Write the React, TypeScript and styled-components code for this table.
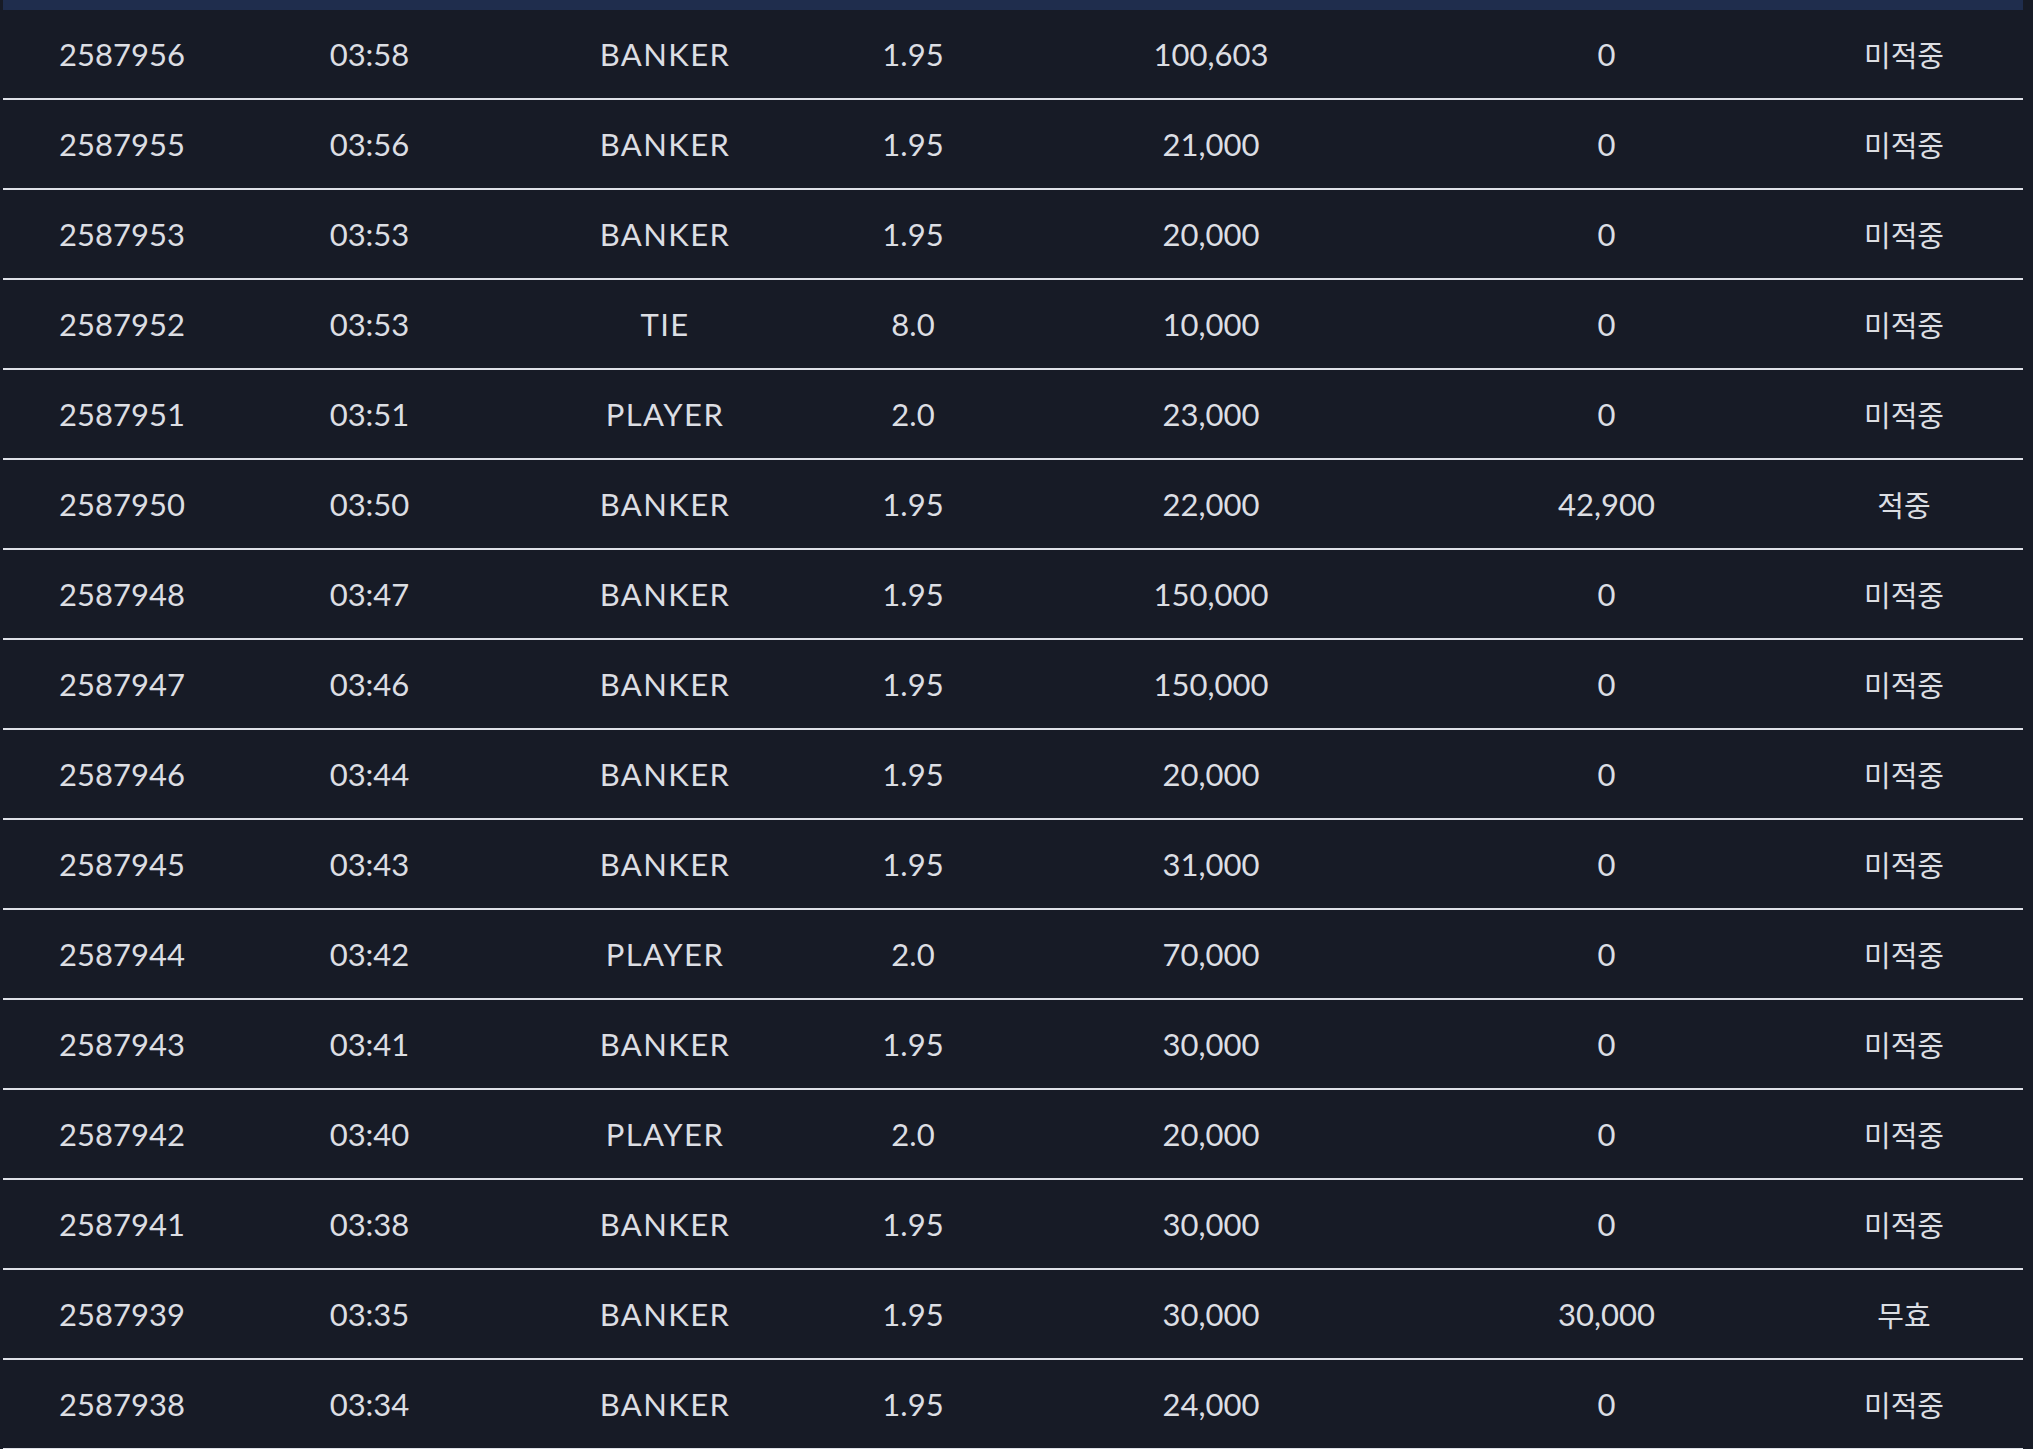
import React from 'react'
import styled, { createGlobalStyle } from 'styled-components'

type Bet = {
  id: string
  time: string
  pick: string
  odds: string
  amount: string
  payout: string
  result: string
}

const bets: Bet[] = [
  { id: '2587956', time: '03:58', pick: 'BANKER', odds: '1.95', amount: '100,603', payout: '0', result: '미적중' },
  { id: '2587955', time: '03:56', pick: 'BANKER', odds: '1.95', amount: '21,000', payout: '0', result: '미적중' },
  { id: '2587953', time: '03:53', pick: 'BANKER', odds: '1.95', amount: '20,000', payout: '0', result: '미적중' },
  { id: '2587952', time: '03:53', pick: 'TIE', odds: '8.0', amount: '10,000', payout: '0', result: '미적중' },
  { id: '2587951', time: '03:51', pick: 'PLAYER', odds: '2.0', amount: '23,000', payout: '0', result: '미적중' },
  { id: '2587950', time: '03:50', pick: 'BANKER', odds: '1.95', amount: '22,000', payout: '42,900', result: '적중' },
  { id: '2587948', time: '03:47', pick: 'BANKER', odds: '1.95', amount: '150,000', payout: '0', result: '미적중' },
  { id: '2587947', time: '03:46', pick: 'BANKER', odds: '1.95', amount: '150,000', payout: '0', result: '미적중' },
  { id: '2587946', time: '03:44', pick: 'BANKER', odds: '1.95', amount: '20,000', payout: '0', result: '미적중' },
  { id: '2587945', time: '03:43', pick: 'BANKER', odds: '1.95', amount: '31,000', payout: '0', result: '미적중' },
  { id: '2587944', time: '03:42', pick: 'PLAYER', odds: '2.0', amount: '70,000', payout: '0', result: '미적중' },
  { id: '2587943', time: '03:41', pick: 'BANKER', odds: '1.95', amount: '30,000', payout: '0', result: '미적중' },
  { id: '2587942', time: '03:40', pick: 'PLAYER', odds: '2.0', amount: '20,000', payout: '0', result: '미적중' },
  { id: '2587941', time: '03:38', pick: 'BANKER', odds: '1.95', amount: '30,000', payout: '0', result: '미적중' },
  { id: '2587939', time: '03:35', pick: 'BANKER', odds: '1.95', amount: '30,000', payout: '30,000', result: '무효' },
  { id: '2587938', time: '03:34', pick: 'BANKER', odds: '1.95', amount: '24,000', payout: '0', result: '미적중' },
]

const App = () => {
  return (
    <>
      <GlobalStyle />
      <Page>
        <Table>
          <HeadBand />
          {bets.map((bet) => (
            <Row key={bet.id}>
              <Cell>{bet.id}</Cell>
              <Cell>{bet.time}</Cell>
              <Cell $wide>{bet.pick}</Cell>
              <Cell>{bet.odds}</Cell>
              <Cell>{bet.amount}</Cell>
              <Cell>{bet.payout}</Cell>
              <ResultCell>{bet.result}</ResultCell>
            </Row>
          ))}
        </Table>
      </Page>
    </>
  )
}

const GlobalStyle = createGlobalStyle`
  html, body {
    margin: 0;
    padding: 0;
    background: #171b26;
    overflow: hidden;
  }
`

const Page = styled.div`
  width: 2033px;
  height: 1449px;
  padding-left: 3px;
  box-sizing: border-box;
  background: #171b26;
  font-family: Lato, "Noto Sans CJK KR", sans-serif;
`

const Table = styled.div`
  width: 2020px;
  display: flex;
  flex-direction: column;
`

const HeadBand = styled.div`
  height: 10px;
  background: #1f2d4d;
`

const Row = styled.div`
  display: grid;
  grid-template-columns: 238px 257px 334px 162px 434px 357px 238px;
  height: 88px;
  align-items: center;
  border-bottom: 2px solid #dfe1e8;
`

const Cell = styled.div<{ $wide?: boolean }>`
  text-align: center;
  color: #dcdee3;
  font-size: 31px;
  font-weight: 400;
  letter-spacing: ${(p) => (p.$wide ? '1.4px' : '0')};
`

const ResultCell = styled.div`
  text-align: center;
  color: #dcdee3;
  font-size: 29px;
  font-weight: 400;
  font-family: "Noto Sans CJK KR", sans-serif;
`

export default App
